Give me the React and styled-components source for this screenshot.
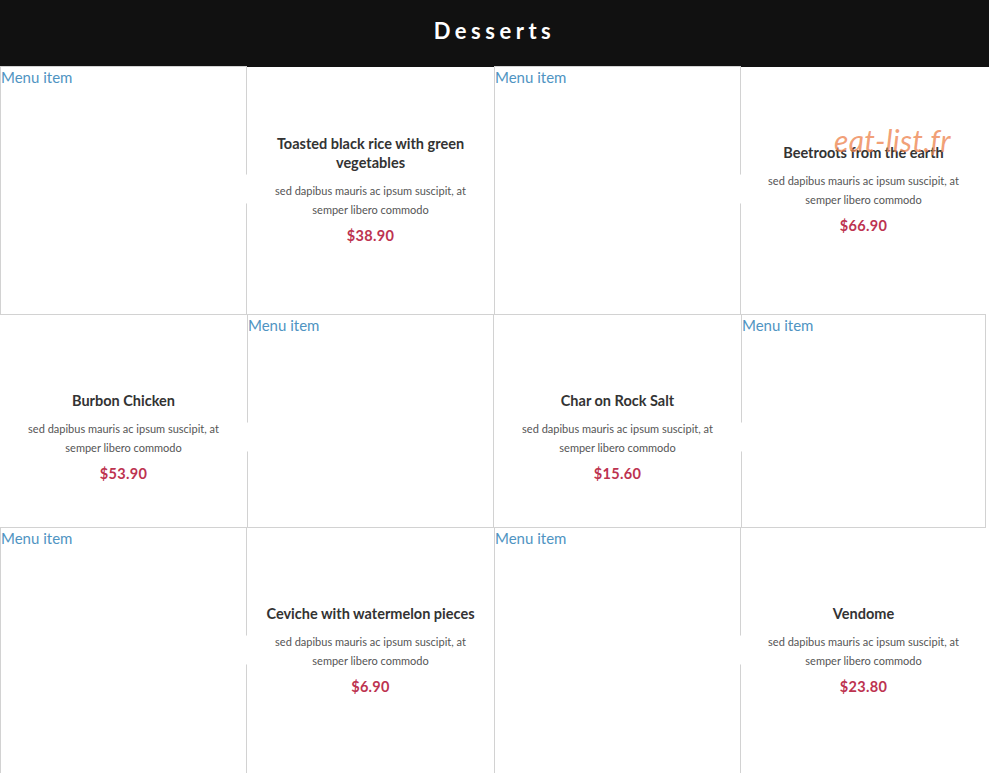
import styled, { createGlobalStyle } from 'styled-components'

const GlobalStyle = createGlobalStyle`
  html, body {
    margin: 0;
    padding: 0;
    background: #ffffff;
    overflow: hidden;
  }
  body {
    font-family: Lato, "Open Sans", sans-serif;
  }
`

const Page = styled.div`
  position: relative;
  width: 989px;
`

const Header = styled.header`
  height: 67px;
  background: #111111;
  display: flex;
  align-items: center;
  justify-content: center;
  padding-bottom: 6px;
  box-sizing: border-box;
`

const Title = styled.h1`
  margin: 0;
  color: #ffffff;
  font-size: 22px;
  font-weight: 700;
  letter-spacing: 4.5px;
`

const Grid = styled.div`
  width: 986px;
  display: grid;
  grid-template-columns: 247px 247px 247px 245px;
  grid-template-rows: 248px 213px 248px;
`

const ImageCell = styled.div`
  border: 1px solid #d2d2d2;
  box-sizing: border-box;
  color: #4f94c2;
  font-size: 15px;
  line-height: 20px;
  margin-top: -1px;
`

const TextCell = styled.div`
  position: relative;
`

const TextBody = styled.div`
  height: 244px;
  display: flex;
  flex-direction: column;
  align-items: center;
  justify-content: center;
  text-align: center;
  padding: 0 8px;
  box-sizing: border-box;
`

const ItemName = styled.h3`
  margin: 0;
  max-width: 210px;
  font-size: 14.5px;
  line-height: 19px;
  font-weight: 700;
  color: #333333;
`

const ItemText = styled.p`
  margin: 9px 0 0;
  max-width: 206px;
  font-size: 11px;
  line-height: 19px;
  color: #555555;
`

const Price = styled.div`
  margin-top: 7px;
  font-size: 14.5px;
  line-height: 19px;
  font-weight: 700;
  color: #bd3350;
  letter-spacing: 0.3px;
`

// white notch pointing at the photo next to the text cell
const Notch = styled.span`
  position: absolute;
  top: 107px;
  ${p => (p.side === 'left' ? 'left: -14px;' : 'right: -14px;')}
  width: 0;
  height: 0;
  border-top: 15px solid transparent;
  border-bottom: 15px solid transparent;
  ${p => (p.side === 'left'
    ? 'border-right: 14px solid #ffffff;'
    : 'border-left: 14px solid #ffffff;')}
  z-index: 1;
`

const Watermark = styled.div`
  position: absolute;
  top: 122px;
  left: 834px;
  font-size: 30px;
  font-style: italic;
  font-weight: 400;
  letter-spacing: 0.3px;
  color: rgba(238, 134, 82, 0.78);
  pointer-events: none;
  z-index: 2;
`

const desc = 'sed dapibus mauris ac ipsum suscipit, at semper libero commodo'

const cells = [
  { type: 'img' },
  { type: 'text', name: 'Toasted black rice with green vegetables', price: '$38.90', side: 'left' },
  { type: 'img' },
  { type: 'text', name: 'Beetroots from the earth', price: '$66.90', side: 'left' },
  { type: 'text', name: 'Burbon Chicken', price: '$53.90', side: 'right' },
  { type: 'img' },
  { type: 'text', name: 'Char on Rock Salt', price: '$15.60', side: 'right' },
  { type: 'img' },
  { type: 'img' },
  { type: 'text', name: 'Ceviche with watermelon pieces', price: '$6.90', side: 'left' },
  { type: 'img' },
  { type: 'text', name: 'Vendome', price: '$23.80', side: 'left' },
]

export default function App() {
  return (
    <Page>
      <GlobalStyle />
      <Header>
        <Title>Desserts</Title>
      </Header>
      <Grid>
        {cells.map((c, i) =>
          c.type === 'img' ? (
            <ImageCell key={i}>Menu item</ImageCell>
          ) : (
            <TextCell key={i}>
              <Notch side={c.side} />
              <TextBody>
                <ItemName>{c.name}</ItemName>
                <ItemText>{desc}</ItemText>
                <Price>{c.price}</Price>
              </TextBody>
            </TextCell>
          )
        )}
      </Grid>
      <Watermark>eat-list.fr</Watermark>
    </Page>
  )
}
